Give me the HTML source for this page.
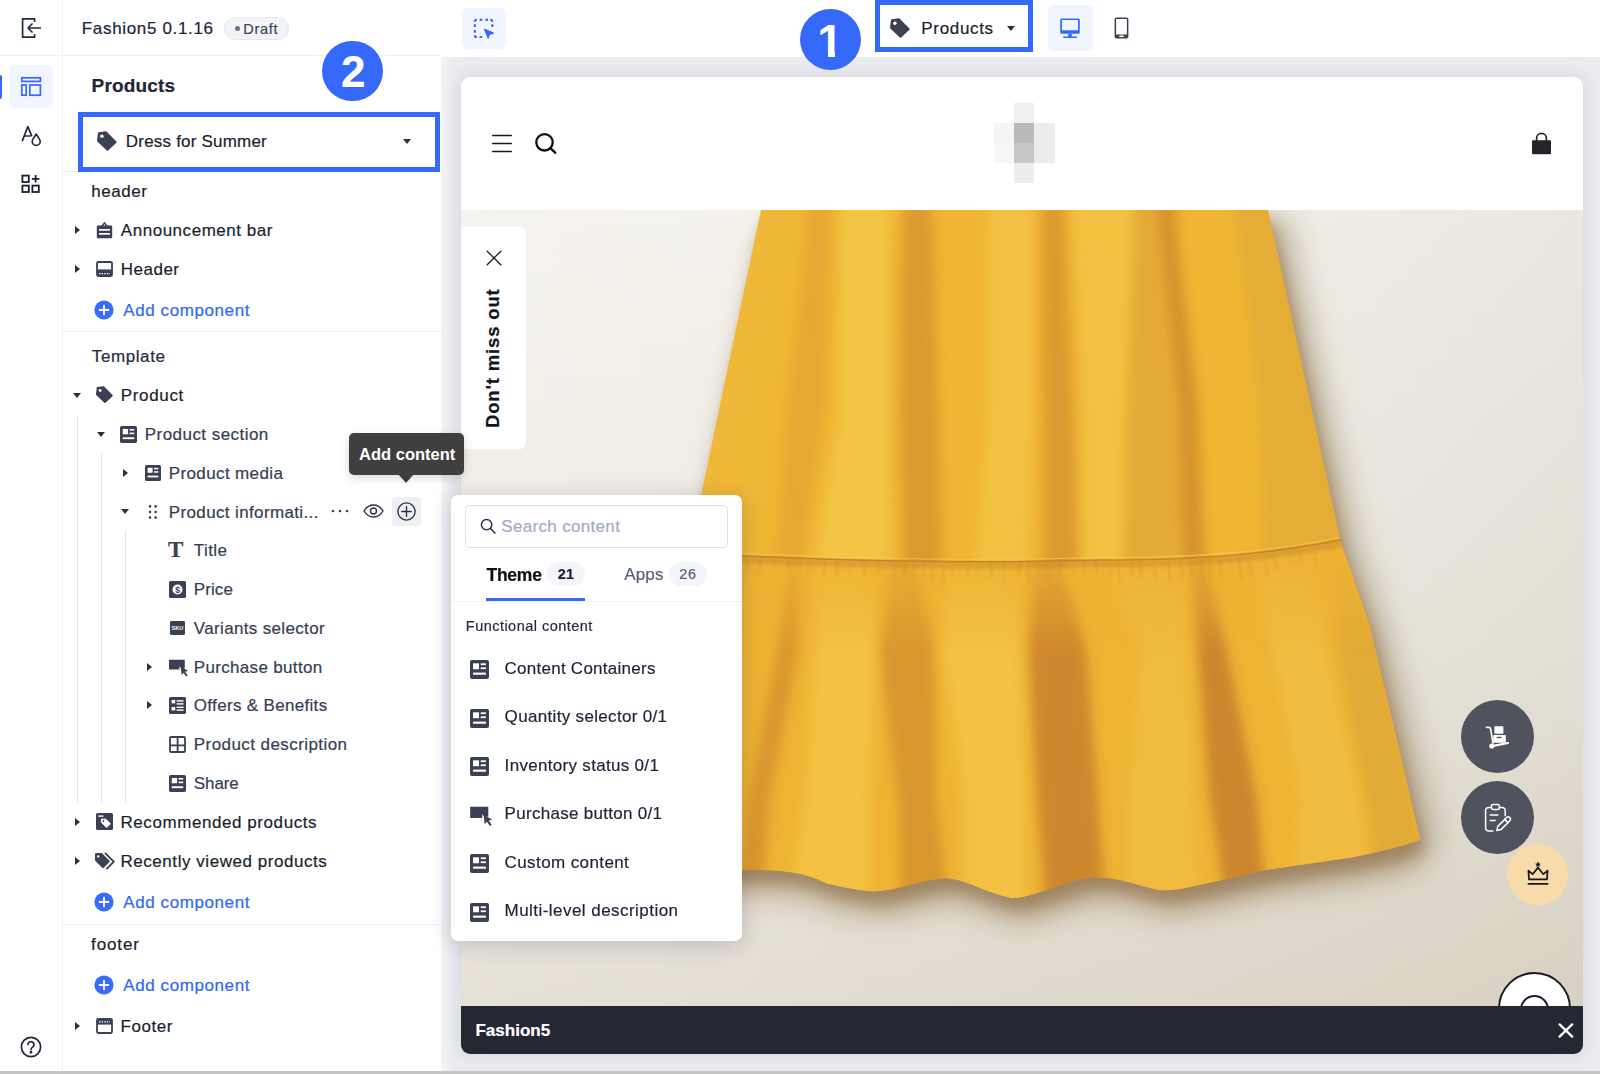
<!DOCTYPE html>
<html lang="en">
<head>
<meta charset="utf-8">
<title>Theme editor</title>
<style>
*{box-sizing:border-box;margin:0;padding:0}
html,body{width:1600px;height:1074px;overflow:hidden;background:#fff}
body{font-family:"Liberation Sans",sans-serif;color:#1d2437;position:relative}
.abs{position:absolute}
.t{position:absolute;white-space:nowrap;line-height:20px;height:20px;-webkit-text-stroke:.2px currentColor}
svg{position:absolute;overflow:visible}
.ic{fill:#3b4052}
#canvas{left:441px;top:56px;width:1159px;height:1018px;background:#ebecf0}
#rail{left:0;top:0;width:63px;height:1074px;background:#fff;border-right:1px solid #eef0f4}
#side{left:63px;top:0;width:378px;height:1074px;background:#fff}
.hl{position:absolute;height:1px;background:#eef0f3}
.vl{position:absolute;width:1px;background:#e3e5ec}
.bluebox{position:absolute;border:5px solid #3569fb}
#preview{left:461px;top:77px;width:1122px;height:977px;border-radius:9px;overflow:hidden;background:#fff;box-shadow:0 0 16px 2px rgba(40,45,75,.10)}
#popup{left:451px;top:495px;width:291px;height:446px;background:#fff;border-radius:7px;box-shadow:0 3px 22px rgba(25,30,60,.20)}
.pill{position:absolute;height:24px;border-radius:12px;background:#f4f5fa}
.car{position:absolute;width:0;height:0;border-style:solid}
.cr{border-width:4px 0 4px 5px;border-color:transparent transparent transparent #2b3042}
.cd{border-width:5px 4px 0 4px;border-color:#2b3042 transparent transparent transparent}
</style>
</head>
<body>
<svg width="0" height="0" style="left:-10px;top:-10px">
<defs>
<symbol id="tag" viewBox="0 0 22 21"><path d="M2.900 2.300L9.800 1.200L19.700 11.100L11.500 18.700L2 9.700Z" fill="currentColor" stroke="currentColor" stroke-width="2" stroke-linejoin="round"/><circle cx="5.900" cy="5.300" r="1.700" fill="#fff"/></symbol>
<symbol id="blk" viewBox="0 0 16 16"><rect x="0" y="0" width="16" height="16" rx="1.6" fill="currentColor"/><rect x="2.6" y="2.8" width="5" height="5" fill="#fff"/><rect x="9" y="2.8" width="4.4" height="1.5" fill="#fff"/><rect x="9" y="6.2" width="4.4" height="1.5" fill="#fff"/><rect x="2.6" y="10.6" width="10.8" height="1.8" fill="#fff"/></symbol>
<symbol id="plusc" viewBox="0 0 20 20"><circle cx="10" cy="10" r="9.6" fill="#3b6bfa"/><path d="M10 5.6v8.8M5.6 10h8.8" stroke="#fff" stroke-width="1.8" stroke-linecap="round"/></symbol>
</defs>
</svg>
<div id="canvas" class="abs"></div>
<div class="abs" style="left:441px;top:56px;width:12px;height:1016px;background:linear-gradient(90deg,#f3f4f7,#ebecf0)"></div>
<div id="side" class="abs"></div>
<div id="rail" class="abs"></div>
<div class="abs" style="left:63px;top:0;width:1537px;height:56.500px;background:#fff"></div>
<div class="hl" style="left:0;top:55px;width:441px"></div>
<!-- rail icons -->
<div class="abs" style="left:0;top:75px;width:2px;height:24px;background:#3569fb;border-radius:0 2px 2px 0"></div>
<div class="abs" style="left:10px;top:65px;width:43px;height:43px;background:#f1f5ff;border-radius:5px"></div>
<svg style="left:20px;top:16px" width="24" height="24" viewBox="0 0 24 24" fill="none" stroke="#222a3e" stroke-width="1.7" stroke-linecap="round" stroke-linejoin="round"><path d="M14.6 5.2V2.8H2.6V21.2H14.6V18.8"/><path d="M20.4 12H8.2M12 8L8 12L12 16"/></svg>
<svg style="left:20px;top:76px" width="22" height="21" viewBox="0 0 22 21" fill="none" stroke="#3569fb" stroke-width="1.7"><rect x="1.8" y="1.8" width="18.6" height="3.6"/><rect x="1.8" y="9" width="4.4" height="10.2"/><rect x="9.8" y="9" width="10.6" height="10.2"/></svg>
<svg style="left:21px;top:125px" width="22" height="22" viewBox="0 0 22 22" fill="none" stroke="#222a3e" stroke-width="1.7" stroke-linecap="round" stroke-linejoin="round"><path d="M1.4 15.6L6.8 1.6L10.6 10.6M3.4 11h5.6"/><path d="M15.2 9.2c2.2 3.2 4 5 4 7.2a4 4 0 0 1-8 0c0-2.2 1.800-4 4-7.200z"/></svg>
<svg style="left:21px;top:174px" width="20" height="20" viewBox="0 0 20 20" fill="none" stroke="#1b2030" stroke-width="1.8"><rect x="1.400" y="1.6" width="6.4" height="6.4"/><rect x="1.4" y="11.6" width="6.4" height="6.400"/><rect x="11.400" y="11.6" width="6.4" height="6.4"/><path d="M14.6 1v7.600M10.8 4.800h7.600"/></svg>
<svg style="left:20px;top:1036px" width="22" height="22" viewBox="0 0 22 22" fill="none" stroke="#1f2437" stroke-width="1.7" stroke-linecap="round"><circle cx="11" cy="11" r="9.600"/><path d="M8 8.600a3 3 0 1 1 4.600 2.500c-1 .7-1.600 1.200-1.600 2.400"/><circle cx="11" cy="16.200" r=".6" fill="#1f2437"/></svg>
<!-- Draft pill -->
<div class="abs" style="left:224px;top:17px;width:65px;height:23px;border-radius:12px;background:#f3f4f8;border:1px solid #e6e8ef"></div>
<div class="abs" style="left:235px;top:26px;width:5px;height:5px;border-radius:3px;background:#6b7389"></div>
<!-- blue circle 2 -->
<div class="abs" style="left:322px;top:40.500px;width:60.500px;height:60.500px;border-radius:31px;background:#3569fb"></div>
<!-- separators -->
<div class="hl" style="left:63px;top:171px;width:378px"></div>
<div class="hl" style="left:63px;top:331px;width:378px"></div>
<div class="hl" style="left:63px;top:924px;width:378px"></div>
<!-- blue box 2 -->
<div class="bluebox" style="left:78px;top:112px;width:362px;height:60px;background:#fff"></div>
<svg style="left:96px;top:131px;color:#3b4052" width="22" height="21"><use href="#tag"/></svg>
<div class="car cd" style="left:403px;top:139px"></div>
<!-- header group -->
<div class="car cr" style="left:75px;top:226px"></div>
<svg style="left:96px;top:221px" width="17" height="18" viewBox="0 0 17 18"><path class="ic" d="M5.400 4.400L8.500 .8l3.100 3.600h3.400a1.200 1.200 0 0 1 1.200 1.200V16a1.200 1.200 0 0 1-1.200 1.200H2A1.200 1.200 0 0 1 .8 16V5.600A1.200 1.200 0 0 1 2 4.400zM7.400 4.400h2.200L8.500 3.100z" fill-rule="evenodd"/><rect x="3" y="8" width="11" height="1.700" fill="#fff"/><rect x="3" y="12" width="11" height="1.700" fill="#fff"/></svg>
<div class="car cr" style="left:75px;top:265px"></div>
<svg style="left:96px;top:261px" width="17" height="16" viewBox="0 0 17 16"><rect x="1" y="1" width="15" height="14" rx="1.200" fill="none" stroke="#3b4052" stroke-width="1.800"/><rect x="1" y="8.400" width="15" height="6.600" class="ic"/><path d="M3 12.600h11" stroke="#fff" stroke-width="1.200" stroke-dasharray="1.400 1.200"/></svg>
<svg style="left:94px;top:300px" width="20" height="20"><use href="#plusc"/></svg>
<!-- template group -->
<div class="car cd" style="left:73px;top:393px"></div>
<svg style="left:95px;top:386px;color:#3b4052" width="19" height="18"><use href="#tag"/></svg>
<div class="vl" style="left:77px;top:415px;height:388px"></div>
<div class="vl" style="left:101px;top:453px;height:350px"></div>
<div class="vl" style="left:125px;top:530px;height:273px"></div>
<div class="car cd" style="left:97px;top:432px"></div>
<svg style="left:120px;top:426px;color:#3b4052" width="17" height="17"><use href="#blk"/></svg>
<div class="car cr" style="left:123px;top:469px"></div>
<svg style="left:145px;top:465px;color:#3b4052" width="16" height="16"><use href="#blk"/></svg>
<div class="car cd" style="left:121px;top:509px"></div>
<svg style="left:148px;top:504px" width="10" height="16" viewBox="0 0 10 16" class="ic"><circle cx="2" cy="2.400" r="1.300"/><circle cx="7.600" cy="2.400" r="1.300"/><circle cx="2" cy="8" r="1.300"/><circle cx="7.600" cy="8" r="1.300"/><circle cx="2" cy="13.600" r="1.300"/><circle cx="7.600" cy="13.600" r="1.300"/></svg>
<svg style="left:331px;top:509px" width="18" height="4" viewBox="0 0 18 4" class="ic"><circle cx="2" cy="2" r="1.300"/><circle cx="9" cy="2" r="1.300"/><circle cx="16" cy="2" r="1.300"/></svg>
<svg style="left:363px;top:503px" width="21" height="16" viewBox="0 0 21 16" fill="none" stroke="#2d3347" stroke-width="1.400"><path d="M1 8c2.400-4 5.600-6 9.500-6s7.100 2 9.500 6c-2.400 4-5.600 6-9.500 6S3.400 12 1 8z"/><circle cx="10.500" cy="8" r="3"/></svg>
<div class="abs" style="left:392px;top:497px;width:29px;height:29px;border-radius:4px;background:#eef0f4"></div>
<svg style="left:396px;top:501px" width="21" height="21" viewBox="0 0 21 21" fill="none" stroke="#2d3347" stroke-width="1.400" stroke-linecap="round"><circle cx="10.500" cy="10.500" r="8.600"/><path d="M10.500 5.800v9.400M5.800 10.500h9.400"/></svg>
<!-- level-3 icons -->
<svg style="left:169px;top:581px" width="17" height="17" viewBox="0 0 17 17"><rect width="17" height="17" rx="1.600" class="ic"/><circle cx="8.500" cy="8.500" r="5" fill="#fff"/><text x="8.500" y="11.600" font-size="8.500" font-weight="700" text-anchor="middle" font-family="Liberation Sans,sans-serif" fill="#3b4052">$</text></svg>
<svg style="left:170px;top:621px" width="15" height="14" viewBox="0 0 15 14"><rect width="15" height="14" rx="1.400" class="ic"/><text x="7.500" y="9.400" font-size="5.600" font-weight="700" text-anchor="middle" font-family="Liberation Sans,sans-serif" fill="#fff">SKU</text></svg>
<div class="car cr" style="left:147px;top:663px"></div>
<svg style="left:169px;top:658.500px" width="21" height="18" viewBox="0 0 20 17"><path class="ic" d="M0 .6h15v8.400h-3.400L10 6.600V10H0z"/><path class="ic" d="M11.200 7.400l7 3.800-2.800.8 2.400 3.600-1.500 1-2.400-3.600-1.900 2.100z"/></svg>
<div class="car cr" style="left:147px;top:701px"></div>
<svg style="left:169px;top:697px" width="17" height="17" viewBox="0 0 17 17"><rect width="17" height="17" rx="1.600" class="ic"/><g fill="#fff"><rect x="2.600" y="3" width="3.600" height="3.400"/><rect x="7.600" y="3.200" width="7" height="1.400"/><rect x="7.600" y="6.200" width="7" height="1.400"/><rect x="2.600" y="10" width="3.600" height="3.400"/><rect x="7.600" y="9.600" width="7" height="1.400"/><rect x="7.600" y="12.400" width="7" height="1.400"/></g></svg>
<svg style="left:169px;top:736px" width="17" height="17" viewBox="0 0 17 17" fill="none" stroke="#3b4052" stroke-width="1.800"><rect x="1" y="1" width="15" height="15" rx="1"/><path d="M8.600 1v15M1 9.400h15"/></svg>
<svg style="left:169px;top:775px;color:#3b4052" width="17" height="17"><use href="#blk"/></svg>
<!-- bottom group -->
<div class="car cr" style="left:75px;top:818px"></div>
<svg style="left:96px;top:813px" width="17" height="17" viewBox="0 0 17 17"><rect width="17" height="17" rx="1.600" class="ic"/><rect x="2.400" y="2.400" width="5" height="1.400" fill="#fff"/><path d="M5.400 6.200h4.400l4.600 4.600-3.800 3.800L5.400 9.400z" fill="#fff" stroke="#fff" stroke-width="1" stroke-linejoin="round"/><circle cx="7.400" cy="8" r=".9" class="ic"/></svg>
<div class="car cr" style="left:75px;top:857px"></div>
<svg style="left:94px;top:852px" width="22" height="18" viewBox="0 0 22 18"><path class="ic" d="M1 2.200A1.200 1.200 0 0 1 2.200 1h5.600l7.600 7.400a1.200 1.200 0 0 1 0 1.700l-5.600 5.700a1.200 1.200 0 0 1-1.700 0L1 8.400z"/><circle cx="4.200" cy="4.400" r="1.200" fill="#fff"/><path d="M11.400 1.400l8.400 8.200-6.800 7" fill="none" stroke="#3b4052" stroke-width="1.900" stroke-linecap="round" stroke-linejoin="round"/></svg>
<svg style="left:94px;top:892px" width="20" height="20"><use href="#plusc"/></svg>
<svg style="left:94px;top:975px" width="20" height="20"><use href="#plusc"/></svg>
<div class="car cr" style="left:75px;top:1022px"></div>
<svg style="left:96px;top:1018px" width="17" height="16" viewBox="0 0 17 16"><rect x="1" y="1" width="15" height="14" rx="1.200" fill="none" stroke="#3b4052" stroke-width="1.800"/><rect x="1" y="1" width="15" height="5.600" class="ic"/><path d="M3 3.800h11" stroke="#fff" stroke-width="1.200" stroke-dasharray="1.400 1.200"/></svg>
<div class="t" style="left:81.8px;top:19.0px;font-size:17px;color:#1d2437;letter-spacing:0.665px">Fashion5 0.1.16</div>
<div class="t" style="left:243.2px;top:19.0px;font-size:14.5px;color:#3c445c;letter-spacing:0.756px">Draft</div>
<div class="t" style="left:91.6px;top:76.3px;font-size:19px;color:#1f2536;letter-spacing:0.168px;font-weight:700">Products</div>
<div class="t" style="left:125.8px;top:132.0px;font-size:17px;color:#1a1f2e;letter-spacing:0.205px">Dress for Summer</div>
<div class="t" style="left:91.3px;top:182.0px;font-size:17px;color:#1a1f2e;letter-spacing:0.544px">header</div>
<div class="t" style="left:120.8px;top:221.0px;font-size:17px;color:#1a1f2e;letter-spacing:0.534px">Announcement bar</div>
<div class="t" style="left:120.8px;top:259.8px;font-size:17px;color:#1a1f2e;letter-spacing:0.489px">Header</div>
<div class="t" style="left:123.3px;top:300.5px;font-size:17px;color:#3366fa;letter-spacing:0.585px">Add component</div>
<div class="t" style="left:91.8px;top:347.0px;font-size:17px;color:#262c3e;letter-spacing:0.589px">Template</div>
<div class="t" style="left:120.8px;top:386.0px;font-size:17px;color:#1a1f2e;letter-spacing:0.658px">Product</div>
<div class="t" style="left:144.8px;top:425.0px;font-size:17px;color:#363d52;letter-spacing:0.451px">Product section</div>
<div class="t" style="left:168.8px;top:464.0px;font-size:17px;color:#363d52;letter-spacing:0.371px">Product media</div>
<div class="t" style="left:168.8px;top:502.5px;font-size:17px;color:#363d52;letter-spacing:0.364px">Product informati...</div>
<div class="t" style="left:193.8px;top:541.0px;font-size:17px;color:#363d52;letter-spacing:0.440px">Title</div>
<div class="t" style="left:193.8px;top:580.0px;font-size:17px;color:#363d52;letter-spacing:0.093px">Price</div>
<div class="t" style="left:193.8px;top:619.0px;font-size:17px;color:#363d52;letter-spacing:0.344px">Variants selector</div>
<div class="t" style="left:193.8px;top:657.5px;font-size:17px;color:#363d52;letter-spacing:0.326px">Purchase button</div>
<div class="t" style="left:193.8px;top:696.3px;font-size:17px;color:#363d52;letter-spacing:0.323px">Offers &amp; Benefits</div>
<div class="t" style="left:193.8px;top:735.0px;font-size:17px;color:#363d52;letter-spacing:0.430px">Product description</div>
<div class="t" style="left:193.8px;top:774.0px;font-size:17px;color:#363d52;letter-spacing:-0.085px">Share</div>
<div class="t" style="left:120.5px;top:812.7px;font-size:17px;color:#1a1f2e;letter-spacing:0.569px">Recommended products</div>
<div class="t" style="left:120.5px;top:851.7px;font-size:17px;color:#1a1f2e;letter-spacing:0.545px">Recently viewed products</div>
<div class="t" style="left:123.3px;top:893.0px;font-size:17px;color:#3366fa;letter-spacing:0.585px">Add component</div>
<div class="t" style="left:91.1px;top:935.0px;font-size:17px;color:#1a1f2e;letter-spacing:0.869px">footer</div>
<div class="t" style="left:123.3px;top:976.0px;font-size:17px;color:#3366fa;letter-spacing:0.585px">Add component</div>
<div class="t" style="left:120.5px;top:1017.0px;font-size:17px;color:#1a1f2e;letter-spacing:0.560px">Footer</div>
<div class="t" style="left:341px;top:50px;width:22px;text-align:center;font-size:44px;line-height:44px;height:44px;font-weight:700;color:#fff">2</div>
<div class="t" style="left:168px;top:539px;font-family:'Liberation Serif',serif;font-weight:700;font-size:23px;line-height:22px;height:22px;color:#3b4052">T</div>
<!-- preview card -->
<div id="preview" class="abs"><div class="abs" style="left:-461px;top:-77px;width:1600px;height:1074px">
<!-- store header -->
<svg style="left:492px;top:134px" width="20" height="19" viewBox="0 0 20 19" stroke="#17171c" stroke-width="1.600" stroke-linecap="round"><path d="M.8 1.500h18.400M.8 9.500h18.400M.8 17.500h18.400"/></svg>
<svg style="left:534px;top:132px" width="24" height="23" viewBox="0 0 24 23" fill="none" stroke="#0f0f12" stroke-width="2.300" stroke-linecap="round"><circle cx="10.500" cy="10.300" r="8.200"/><path d="M16.600 16.400l4.800 4.400"/></svg>
<div class="abs" style="left:1014px;top:102.500px;width:20px;height:20px;background:#f0f0f0"></div>
<div class="abs" style="left:1014px;top:122.500px;width:20px;height:20.500px;background:#b9babc"></div>
<div class="abs" style="left:1014px;top:143px;width:20px;height:20px;background:#c6c7c9"></div>
<div class="abs" style="left:1014px;top:163px;width:20px;height:20px;background:#eceeed"></div>
<div class="abs" style="left:994px;top:122.500px;width:20px;height:20.500px;background:#f5f5f5"></div>
<div class="abs" style="left:994px;top:143px;width:20px;height:20px;background:#f6f8f7"></div>
<div class="abs" style="left:1034px;top:122.500px;width:20.500px;height:40.500px;background:#ebedec"></div>
<svg style="left:1531px;top:132px" width="21" height="23" viewBox="0 0 21 23"><path d="M5.600 9.500V6.200a4.900 4.900 0 0 1 9.800 0v3.300" fill="none" stroke="#25232a" stroke-width="1.700"/><rect x="1" y="8.300" width="19" height="14" rx="1.200" fill="#25232a"/></svg>
<!-- hero image -->
<svg style="left:461px;top:210px;overflow:hidden" width="1122" height="796" viewBox="461 210 1122 796">
<defs>
<linearGradient id="bgv" x1="0" y1="0" x2="0" y2="1"><stop offset="0" stop-color="#f2efe8"/><stop offset=".55" stop-color="#eae6dd"/><stop offset="1" stop-color="#ded7ca"/></linearGradient>
<linearGradient id="bgh" x1="0" y1="0" x2="1" y2="0"><stop offset="0" stop-color="#fff" stop-opacity=".25"/><stop offset=".5" stop-color="#fff" stop-opacity=".05"/><stop offset="1" stop-color="#8a7c60" stop-opacity=".07"/></linearGradient>
<linearGradient id="gfade" x1="0" y1="0" x2="0" y2="1"><stop offset="0" stop-color="#eeb133" stop-opacity=".8"/><stop offset=".3" stop-color="#eeb133" stop-opacity=".7"/><stop offset="1" stop-color="#eeb133" stop-opacity="0"/></linearGradient>
<filter id="b14" x="-20%" y="-20%" width="140%" height="140%"><feGaussianBlur stdDeviation="14"/></filter>
<filter id="b9" x="-20%" y="-20%" width="140%" height="140%"><feGaussianBlur stdDeviation="9"/></filter>
<filter id="b6" x="-20%" y="-20%" width="140%" height="140%"><feGaussianBlur stdDeviation="6"/></filter>
<filter id="b7" x="-20%" y="-20%" width="140%" height="140%"><feGaussianBlur stdDeviation="7"/></filter>
<filter id="b2"><feGaussianBlur stdDeviation="1.600"/></filter>
<filter id="b1"><feGaussianBlur stdDeviation="1"/></filter>
<path id="dshape" d="M761 210H1268L1340 540L1370 626L1396 735L1420.500 840C1398 848 1375 853 1352 857.500C1322 862 1292 866 1265 870.600C1240 876 1218 882 1195 886C1182 889 1171 891 1160 890.300C1147 888 1137 884 1125 881.600C1111 878 1098 877 1085.600 878.500C1071 881 1059 886 1046 890.300C1033 895 1022 898.500 1011 898C1001 896 993 893 985 890.300C971 884 958 879 945.600 878.500C934 879 925 881 915 883.800C899 888 885 892 871 891.600C856 890 842 887 827.500 883.800C815 878 804 874 792.500 872.800C775 870 758 870 740 870.600L608 872L689 555L701.500 494Z"/>
<path id="ushape" d="M761 210H1268L1340.500 540C1260 556 1180 561 1100 560C1020 562.500 900 563 742 556L689 556L701.500 494Z"/>
<clipPath id="cu"><use href="#ushape"/></clipPath>
<clipPath id="cl"><use href="#dshape"/></clipPath>
</defs>
<rect x="461" y="210" width="1122" height="796" fill="url(#bgv)"/>
<rect x="461" y="210" width="1122" height="796" fill="url(#bgh)"/>
<use href="#dshape" transform="translate(20 6)" fill="#a8997c" opacity=".55" filter="url(#b14)"/>
<use href="#dshape" transform="translate(5 26)" fill="#9c7f55" opacity=".5" filter="url(#b14)"/>
<use href="#dshape" transform="translate(4 12)" fill="#8f7048" opacity=".55" filter="url(#b7)"/>
<g clip-path="url(#cl)"><use href="#dshape" fill="#efb434"/><g filter="url(#b6)">
<polygon points="790,556 777,650 749,800 744,855 738,912 762,912 766,855 770,800 798,650 800,556" fill="#d0862d" opacity="0.65"/>
<polygon points="895,556 880,650 898,800 900,855 900,912 948,912 943,855 936,800 934,650 915,556" fill="#cd872d" opacity="0.65"/>
<polygon points="1035,556 1029,650 1037,800 1042,855 1046,912 1106,912 1102,855 1098,800 1086,650 1060,556" fill="#c0742b" opacity="0.7"/>
<polygon points="1190,556 1198,650 1210,800 1219,855 1226,912 1268,912 1262,855 1257,800 1227,650 1205,556" fill="#bd722b" opacity="0.7"/>
<polygon points="1338,556 1338,650 1366,800 1376,855 1386,912 1432,912 1422,855 1412,800 1382,650 1343,556" fill="#d6a036" opacity="0.5"/>
<polygon points="680,556 640,650 600,800 590,855 580,912 670,912 675,855 680,800 700,650 720,556" fill="#d59a33" opacity="0.5"/>
<polygon points="815,556 814,650 805,800 796,855 790,912 869,912 869,855 869,800 876,650 870,556" fill="#f5c545" opacity="0.75"/>
<polygon points="945,556 942,650 964,800 964,855 964,912 1025,912 1025,855 1025,800 1020,650 1015,556" fill="#f5c545" opacity="0.75"/>
<polygon points="1100,556 1140,650 1128,800 1128,855 1128,912 1200,912 1197,855 1193,800 1187,650 1180,556" fill="#f0bd42" opacity="0.8"/>
<polygon points="1250,556 1272,650 1300,800 1296,855 1296,912 1368,912 1365,855 1361,800 1326,650 1310,556" fill="#f1be43" opacity="0.8"/>
</g><rect x="600" y="535" width="850" height="120" fill="url(#gfade)"/></g>
<g fill="none" stroke-linecap="round" filter="url(#b1)"><path d="M748.0 558.7q-0.6 6.4 -2.0 12.9" stroke="#b06c28" stroke-width="1.9" opacity="0.21"/><path d="M760.1 559.2q-0.9 7.3 -3.0 14.6" stroke="#b06c28" stroke-width="2.1" opacity="0.16"/><path d="M774.4 559.8q-0.5 4.1 -1.7 8.2" stroke="#b06c28" stroke-width="2.3" opacity="0.11"/><path d="M788.0 560.4q0.0 3.8 0.1 7.5" stroke="#b06c28" stroke-width="2.1" opacity="0.22"/><path d="M800.9 560.9q-0.7 4.5 -2.4 9.0" stroke="#b06c28" stroke-width="1.3" opacity="0.16"/><path d="M810.4 561.3q-0.7 5.1 -2.4 10.1" stroke="#b06c28" stroke-width="1.8" opacity="0.16"/><path d="M825.1 561.9q-0.4 6.9 -1.3 13.7" stroke="#b06c28" stroke-width="2.1" opacity="0.16"/><path d="M836.8 562.4q0.0 5.3 0.0 10.6" stroke="#b06c28" stroke-width="2.4" opacity="0.22"/><path d="M850.5 563.0q-0.5 5.5 -1.8 11.1" stroke="#b06c28" stroke-width="1.3" opacity="0.13"/><path d="M864.6 563.5q-0.1 6.1 -0.3 12.2" stroke="#b06c28" stroke-width="2.5" opacity="0.15"/><path d="M879.4 564.2q-0.4 3.5 -1.3 7.0" stroke="#b06c28" stroke-width="1.9" opacity="0.21"/><path d="M895.2 564.8q-0.6 6.1 -1.9 12.2" stroke="#b06c28" stroke-width="2.3" opacity="0.18"/><path d="M905.4 565.0q-0.3 4.1 -0.9 8.1" stroke="#b06c28" stroke-width="2.3" opacity="0.22"/><path d="M914.3 564.9q-0.5 5.1 -1.6 10.2" stroke="#b06c28" stroke-width="2.3" opacity="0.11"/><path d="M923.7 564.9q-0.3 7.1 -0.9 14.3" stroke="#b06c28" stroke-width="2.2" opacity="0.12"/><path d="M932.8 564.9q-0.5 7.7 -1.7 15.4" stroke="#b06c28" stroke-width="1.5" opacity="0.15"/><path d="M942.9 564.8q-0.0 9.8 -0.1 19.6" stroke="#b06c28" stroke-width="2.4" opacity="0.14"/><path d="M952.6 564.8q0.1 6.1 0.4 12.1" stroke="#b06c28" stroke-width="1.3" opacity="0.18"/><path d="M968.5 564.7q-0.3 4.9 -0.9 9.8" stroke="#b06c28" stroke-width="1.7" opacity="0.19"/><path d="M978.9 564.7q-0.3 4.0 -1.2 8.0" stroke="#b06c28" stroke-width="1.5" opacity="0.17"/><path d="M991.7 564.6q-0.1 5.9 -0.3 11.8" stroke="#b06c28" stroke-width="1.9" opacity="0.22"/><path d="M1004.3 564.6q-0.3 9.1 -0.9 18.3" stroke="#b06c28" stroke-width="2.5" opacity="0.12"/><path d="M1018.9 564.5q-0.2 5.1 -0.7 10.2" stroke="#b06c28" stroke-width="2.5" opacity="0.19"/><path d="M1028.4 564.3q0.3 9.7 1.1 19.4" stroke="#b06c28" stroke-width="1.8" opacity="0.17"/><path d="M1037.3 564.1q0.4 3.8 1.2 7.5" stroke="#b06c28" stroke-width="2.2" opacity="0.13"/><path d="M1047.3 563.8q0.2 8.9 0.6 17.7" stroke="#b06c28" stroke-width="1.4" opacity="0.14"/><path d="M1061.1 563.5q-0.1 3.9 -0.4 7.9" stroke="#b06c28" stroke-width="2.4" opacity="0.17"/><path d="M1074.0 563.2q0.4 5.3 1.4 10.6" stroke="#b06c28" stroke-width="1.2" opacity="0.12"/><path d="M1084.2 562.9q-0.2 6.4 -0.5 12.8" stroke="#b06c28" stroke-width="1.7" opacity="0.12"/><path d="M1096.7 562.6q0.0 4.4 0.1 8.7" stroke="#b06c28" stroke-width="2.6" opacity="0.21"/><path d="M1110.0 562.5q0.3 8.0 1.1 16.0" stroke="#b06c28" stroke-width="1.2" opacity="0.12"/><path d="M1118.1 562.5q0.5 9.4 1.7 18.8" stroke="#b06c28" stroke-width="1.2" opacity="0.22"/><path d="M1131.2 562.5q0.5 6.6 1.5 13.3" stroke="#b06c28" stroke-width="2.6" opacity="0.14"/><path d="M1139.8 562.5q0.5 7.0 1.7 14.1" stroke="#b06c28" stroke-width="2.2" opacity="0.21"/><path d="M1153.4 562.5q0.7 8.7 2.5 17.3" stroke="#b06c28" stroke-width="2.2" opacity="0.14"/><path d="M1168.7 562.5q0.5 9.2 1.5 18.3" stroke="#b06c28" stroke-width="2.4" opacity="0.19"/><path d="M1181.2 562.4q0.4 7.6 1.3 15.1" stroke="#b06c28" stroke-width="2.1" opacity="0.17"/><path d="M1189.9 561.9q0.9 7.7 2.8 15.3" stroke="#b06c28" stroke-width="2.2" opacity="0.21"/><path d="M1201.0 561.3q0.6 8.3 2.1 16.6" stroke="#b06c28" stroke-width="2.4" opacity="0.15"/><path d="M1209.7 560.8q0.3 8.4 0.9 16.8" stroke="#b06c28" stroke-width="1.9" opacity="0.17"/><path d="M1219.5 560.3q0.6 8.0 2.0 16.1" stroke="#b06c28" stroke-width="2.5" opacity="0.17"/><path d="M1229.5 559.7q0.1 3.6 0.5 7.1" stroke="#b06c28" stroke-width="1.5" opacity="0.18"/><path d="M1238.9 559.2q0.9 9.4 3.0 18.8" stroke="#b06c28" stroke-width="2.4" opacity="0.15"/><path d="M1249.5 558.6q0.5 7.8 1.5 15.7" stroke="#b06c28" stroke-width="2.3" opacity="0.15"/><path d="M1264.8 557.1q0.8 9.2 2.6 18.4" stroke="#b06c28" stroke-width="1.6" opacity="0.17"/><path d="M1273.9 555.3q0.9 6.7 3.0 13.5" stroke="#b06c28" stroke-width="2.2" opacity="0.20"/><path d="M1289.5 552.3q0.3 5.3 1.0 10.6" stroke="#b06c28" stroke-width="1.6" opacity="0.15"/><path d="M1299.2 550.4q0.7 6.2 2.5 12.4" stroke="#b06c28" stroke-width="1.6" opacity="0.16"/><path d="M1313.9 547.6q1.1 9.9 3.5 19.8" stroke="#b06c28" stroke-width="1.2" opacity="0.11"/><path d="M1328.9 544.7q0.6 3.8 2.0 7.5" stroke="#b06c28" stroke-width="1.6" opacity="0.17"/></g>
<g clip-path="url(#cu)"><rect x="600" y="200" width="800" height="380" fill="#f0b633"/><g filter="url(#b6)">
<polygon points="808,200 806,250 788,410 780,520 776,575 802,575 808,520 824,410 830,250 830,200" fill="#dc9b30" opacity="0.5"/>
<polygon points="842,200 840,250 840,410 822,520 815,575 888,575 888,520 888,410 888,250 888,200" fill="#f5c84a" opacity="0.8"/>
<polygon points="904,200 902,250 900,410 903,520 903,575 943,575 941,520 938,410 934,250 932,200" fill="#d6932e" opacity="0.8"/>
<polygon points="990,200 988,250 988,410 980,520 978,575 1026,575 1028,520 1032,410 1032,250 1032,200" fill="#f4c648" opacity="0.75"/>
<polygon points="1042,200 1042,250 1043,410 1044,520 1044,575 1079,575 1077,520 1073,410 1066,250 1064,200" fill="#d6932e" opacity="0.8"/>
<polygon points="1074,200 1076,250 1084,410 1084,520 1084,575 1124,575 1124,520 1124,410 1132,250 1134,200" fill="#f4c648" opacity="0.75"/>
<polygon points="1134,200 1132,250 1128,410 1124,520 1122,575 1182,575 1180,520 1172,410 1160,250 1158,200" fill="#dda236" opacity="0.6"/>
<polygon points="1157,200 1161,250 1177,410 1181,520 1185,575 1207,575 1203,520 1199,410 1179,250 1175,200" fill="#cf8b2d" opacity="0.8"/>
<polygon points="1232,200 1240,250 1260,410 1262,520 1264,575 1350,575 1345,520 1320,410 1285,250 1275,200" fill="#d9a336" opacity="0.5"/>
<polygon points="740,200 735,250 700,410 680,520 670,575 756,575 760,520 770,410 795,250 800,200" fill="#f0b93c" opacity="0.5"/>
</g></g>
<path d="M742 556C900 563 1020 562.500 1100 560C1180 561 1260 556 1340.500 540L1343 547C1260 563 1180 568 1100 567C1020 569 900 570 742 563Z" fill="#b8782a" opacity=".32" filter="url(#b2)"/>
<path d="M742 556C900 563 1020 562.500 1100 560C1180 561 1260 556 1340.500 540" fill="none" stroke="#c4842a" stroke-width="1.300"/>
<path d="M742 553.500C900 560.500 1020 560 1100 557.500C1180 558.500 1260 553.500 1340 537.500" fill="none" stroke="#f8cd50" stroke-width="1.200" opacity=".7"/>
</svg>
<!-- Don't miss out card -->
<div class="abs" style="left:461px;top:227px;width:65px;height:221.500px;background:#fff;border-radius:0 6px 6px 0"></div>
<svg style="left:486px;top:250px" width="16" height="16" viewBox="0 0 16 16" stroke="#1a1a22" stroke-width="1.300" stroke-linecap="round"><path d="M1.200 1.200l13.600 13.600M14.800 1.200L1.200 14.800"/></svg>
<!-- floating buttons -->
<div class="abs" style="left:1461px;top:700px;width:73px;height:73px;border-radius:37px;background:#50535e"></div>
<div class="abs" style="left:1461px;top:780.500px;width:73px;height:73px;border-radius:37px;background:#50535e"></div>
<div class="abs" style="left:1507px;top:843.500px;width:61px;height:61px;border-radius:31px;background:#f7dbab"></div>
<svg style="left:1485px;top:725px" width="25" height="25" viewBox="0 0 25 25"><path d="M1.400 2.400h2.400c1 0 1.600.6 1.800 1.600l2.400 14" fill="none" stroke="#fff" stroke-width="1.600" stroke-linecap="round"/><circle cx="6.800" cy="21" r="2.600" fill="#fff"/><rect x="9.400" y="1.200" width="9" height="7.600" rx=".8" fill="#fff"/><rect x="8.200" y="10" width="12.600" height="7.800" rx=".8" fill="#fff"/><rect x="11.600" y="11.800" width="5" height="1.300" fill="#50535e"/><path d="M9.600 20.600l13.400-2.600" stroke="#fff" stroke-width="2.200" stroke-linecap="round"/></svg>
<svg style="left:1484px;top:803px" width="27" height="30" viewBox="0 0 27 30" fill="none" stroke="#fff" stroke-width="1.500" stroke-linecap="round" stroke-linejoin="round"><path d="M7.400 4.400H4.600a3 3 0 0 0-3 3v17.600a3 3 0 0 0 3 3h4.200M15.400 4.400h2.800a3 3 0 0 1 3 3v5.400"/><rect x="7.400" y="1.400" width="8" height="5" rx="1.600"/><path d="M6.200 12h7.600M6.200 17.400h5"/><path d="M12.800 27.600l1-4.200 8.800-8.800a2.260 2.260 0 0 1 3.200 3.200l-8.800 8.800z"/><path d="M20.800 16.400l3.200 3.200"/></svg>
<svg style="left:1527px;top:861px" width="22" height="25" viewBox="0 0 22 25" fill="none" stroke="#16161c" stroke-width="1.700" stroke-linejoin="round" stroke-linecap="round"><path d="M2 18.400h18l.6-8.800-4.200 3.600L11 6.600 5.600 13.200 1.400 9.600z"/><path d="M1.400 22.800h19.200"/><path d="M11 .6l.9 1.900 2 .2-1.500 1.400.4 2L11 5.100 9.200 6.100l.4-2L8.100 2.700l2-.2z" fill="#16161c" stroke="none"/></svg>
<!-- white chat circle -->
<div class="abs" style="left:1497.500px;top:972px;width:73px;height:73px;border-radius:37px;background:#fff;border:2px solid #1c1c28"></div>
<div class="abs" style="left:1520px;top:995px;width:28.500px;height:28.500px;border-radius:15px;border:2px solid #1c1c28"></div>
<!-- bottom bar -->
<div class="abs" style="left:461px;top:1005.500px;width:1122px;height:49px;background:#252733"></div>
<svg style="left:1558px;top:1023px" width="16" height="15" viewBox="0 0 16 15" stroke="#fff" stroke-width="2.300" stroke-linecap="round"><path d="M1.600 1.400l12.600 12.200M14.200 1.400L1.600 13.600"/></svg>
</div></div>
<div class="t" style="left:423.5px;top:349px;width:138px;text-align:center;font-size:18.5px;font-weight:700;color:#14141c;letter-spacing:0.85px;transform:rotate(-90deg);transform-origin:center">Don't miss out</div>
<div class="t" style="left:475.4px;top:1021.3px;font-size:17px;color:#ffffff;letter-spacing:0.022px;font-weight:700">Fashion5</div>
<!-- top bar -->
<div class="abs" style="left:462px;top:7.500px;width:43.500px;height:41px;border-radius:6px;background:#f1f5ff"></div>
<svg style="left:472px;top:17px" width="24" height="24" viewBox="0 0 24 24" fill="none" stroke="#2a5cf8" stroke-width="1.900" stroke-linecap="butt"><path d="M2.800 4.800Q2.800 2.700 4.800 2.700M7.600 2.700H10.200M13.400 2.700H16M18.400 2.700Q20.300 2.700 20.300 4.700M20.300 7.200V10M2.800 7.200V10M2.800 13V15.800M2.800 18.200Q2.800 20.100 4.800 20.100M7.600 20.100H10.200"/><path d="M12.600 12.300L21.400 16.100L17.500 17.400L16.100 21.100Z" fill="#3569fb" stroke="#3569fb" stroke-width="1.200" stroke-linejoin="round"/></svg>
<div class="abs" style="left:800px;top:9px;width:61px;height:61px;border-radius:31px;background:#3569fb"></div>
<div class="bluebox" style="left:874.500px;top:0;width:158.500px;height:52px;background:#fff"></div>
<svg style="left:889px;top:18px;color:#3b4052" width="22" height="21"><use href="#tag"/></svg>
<div class="car cd" style="left:1007px;top:26px"></div>
<div class="abs" style="left:1048px;top:5px;width:45px;height:46px;border-radius:5px;background:#f1f5ff"></div>
<svg style="left:1059px;top:18px" width="22" height="21" viewBox="0 0 22 21"><path d="M1.200 2A1.600 1.600 0 0 1 2.800.4h16.400a1.600 1.600 0 0 1 1.600 1.600V14.200a1.600 1.600 0 0 1-1.600 1.600H2.800A1.600 1.600 0 0 1 1.200 14.200zM2.900 2.100v10.200h16.200V2.100z" fill="#3569fb" fill-rule="evenodd"/><path d="M9.400 15.600h3.200l.3 3h4.900v1.400H4.200v-1.400h4.900z" fill="#3569fb"/></svg>
<svg style="left:1114px;top:17px" width="15" height="22" viewBox="0 0 15 22"><path d="M.6 2.400A2 2 0 0 1 2.600.4h9.800a2 2 0 0 1 2 2v17.200a2 2 0 0 1-2 2H2.600a2 2 0 0 1-2-2zM2.100 2v15.600h10.800V2z" fill="#3b4052" fill-rule="evenodd"/><rect x="5.200" y="18.600" width="4.600" height="1.500" rx=".7" fill="#fff"/></svg>
<div class="t" style="left:921.3px;top:19.0px;font-size:17px;color:#1a1f2e;letter-spacing:0.670px">Products</div>
<div class="t" style="left:815px;top:17.5px;width:30px;text-align:center;font-size:46px;line-height:46px;height:46px;font-weight:700;color:#fff;-webkit-text-stroke:0;clip-path:polygon(0 0,30px 0,30px 33.5px,19.9px 33.5px,19.9px 46px,13px 46px,13px 33.5px,0 33.5px)">1</div>
<!-- tooltip -->
<div class="abs" style="left:349px;top:433px;width:115px;height:42px;border-radius:5px;background:#3f3f3f;box-shadow:0 3px 10px rgba(0,0,0,.16)"></div>
<div class="abs" style="left:398px;top:474px;width:0;height:0;border-style:solid;border-width:9px 8px 0 8px;border-color:#3f3f3f transparent transparent transparent"></div>
<!-- popup -->
<div id="popup" class="abs"></div>
<div class="abs" style="left:465px;top:505px;width:263px;height:43px;border:1px solid #dde1ec;border-radius:5px;background:#fff"></div>
<svg style="left:480px;top:518px" width="16" height="16" viewBox="0 0 16 16" fill="none" stroke="#2d3347" stroke-width="1.500" stroke-linecap="round"><circle cx="6.600" cy="6.600" r="5.200"/><path d="M10.600 10.600l4.400 4.400"/></svg>
<div class="pill" style="left:547px;top:562px;width:38px"></div>
<div class="pill" style="left:669px;top:562px;width:38px"></div>
<div class="hl" style="left:451px;top:601px;width:291px;background:#f1f2f6"></div>
<div class="abs" style="left:485.500px;top:598px;width:99.500px;height:3px;background:#3569fb"></div>
<svg style="left:470px;top:660px;color:#3b4052" width="19" height="19"><use href="#blk"/></svg>
<svg style="left:470px;top:708.5px;color:#3b4052" width="19" height="19"><use href="#blk"/></svg>
<svg style="left:470px;top:757px;color:#3b4052" width="19" height="19"><use href="#blk"/></svg>
<svg style="left:470px;top:805.500px" width="24.500" height="20.500" viewBox="0 0 20 17"><path class="ic" d="M0 .6h15v8.400h-3.400L10 6.600V10H0z"/><path class="ic" d="M11.200 7.400l7 3.800-2.800.8 2.400 3.600-1.500 1-2.400-3.600-1.900 2.100z"/></svg>
<svg style="left:470px;top:854px;color:#3b4052" width="19" height="19"><use href="#blk"/></svg>
<svg style="left:470px;top:902.5px;color:#3b4052" width="19" height="19"><use href="#blk"/></svg>
<div class="t" style="left:359.1px;top:444.0px;font-size:16.5px;color:#ffffff;letter-spacing:-0.009px;font-weight:700;-webkit-text-stroke:0">Add content</div>
<div class="t" style="left:501.3px;top:516.5px;font-size:17px;color:#a3acc4;letter-spacing:0.324px">Search content</div>
<div class="t" style="left:486.5px;top:564.6px;font-size:17.5px;color:#0e1016;letter-spacing:-0.261px;font-weight:700">Theme</div>
<div class="t" style="left:557.8px;top:564.0px;font-size:14.5px;color:#1a1f2e;letter-spacing:0.130px;font-weight:700">21</div>
<div class="t" style="left:624.2px;top:564.6px;font-size:17px;color:#566079;letter-spacing:0.162px">Apps</div>
<div class="t" style="left:679.3px;top:564.0px;font-size:14.5px;color:#566079;letter-spacing:0.630px">26</div>
<div class="t" style="left:465.8px;top:616.0px;font-size:14.5px;color:#262c3e;letter-spacing:0.472px">Functional content</div>
<div class="t" style="left:504.5px;top:658.5px;font-size:17px;color:#1d2437;letter-spacing:0.262px">Content Containers</div>
<div class="t" style="left:504.6px;top:707.0px;font-size:17px;color:#1d2437;letter-spacing:0.328px">Quantity selector 0/1</div>
<div class="t" style="left:504.6px;top:755.7px;font-size:17px;color:#1d2437;letter-spacing:0.311px">Inventory status 0/1</div>
<div class="t" style="left:504.6px;top:804.2px;font-size:17px;color:#1d2437;letter-spacing:0.286px">Purchase button 0/1</div>
<div class="t" style="left:504.6px;top:852.8px;font-size:17px;color:#1d2437;letter-spacing:0.396px">Custom content</div>
<div class="t" style="left:504.6px;top:901.0px;font-size:17px;color:#1d2437;letter-spacing:0.454px">Multi-level description</div>
<div class="abs" style="left:0;top:1071px;width:1600px;height:3px;background:#c5c5c5"></div>
</body>
</html>
